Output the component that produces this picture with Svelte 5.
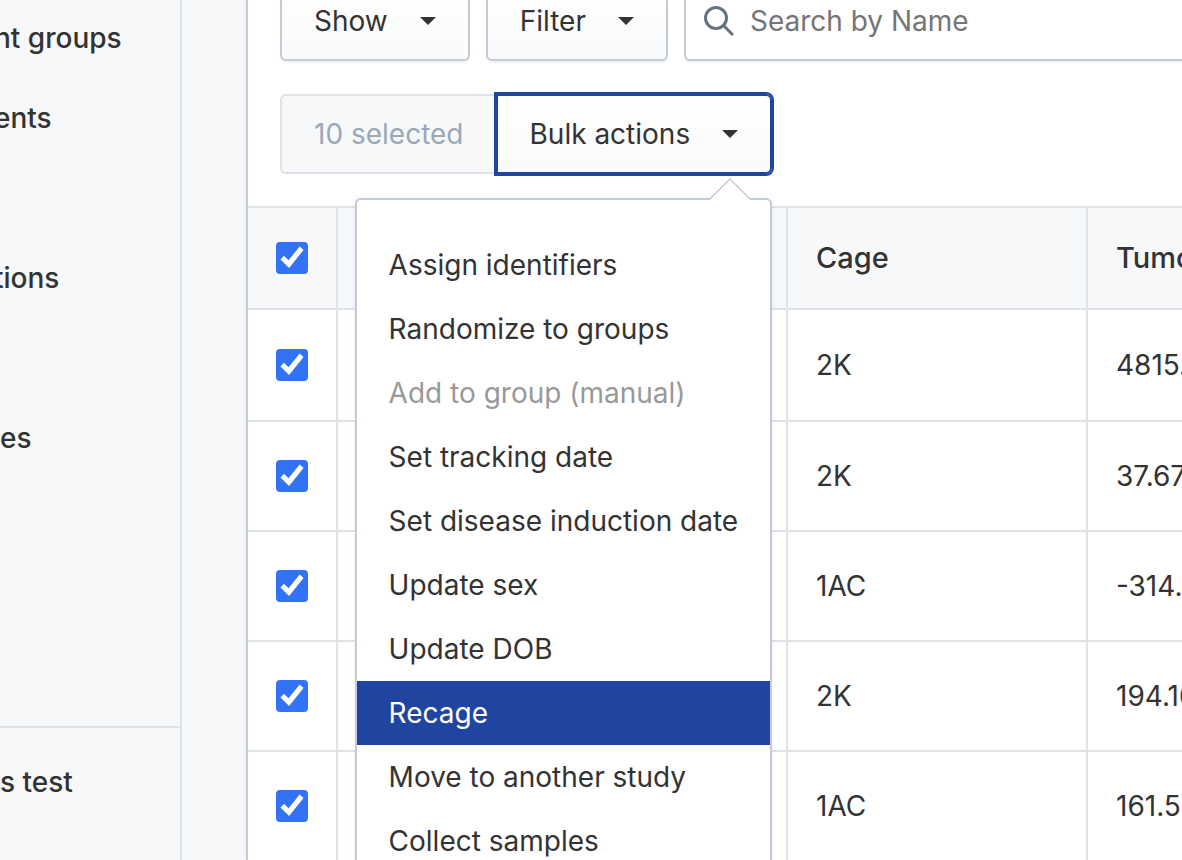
<script lang="ts">
  type NavItem = { label: string; cut?: boolean };
  type Row = { id: number; cage: string; volume: string; selected: boolean };
  type Action = { label: string; disabled?: boolean };

  // cut: the label starts in the middle of a letter at the window edge
  const navGroups: NavItem[][] = [
    [
      { label: 'nt groups', cut: true },
      { label: 'ents', cut: true }
    ],
    [{ label: 'tions', cut: true }],
    [{ label: 'es' }]
  ];

  const actions: Action[] = [
    { label: 'Assign identifiers' },
    { label: 'Randomize to groups' },
    { label: 'Add to group (manual)', disabled: true },
    { label: 'Set tracking date' },
    { label: 'Set disease induction date' },
    { label: 'Update sex' },
    { label: 'Update DOB' },
    { label: 'Recage' },
    { label: 'Move to another study' },
    { label: 'Collect samples' }
  ];

  let rows: Row[] = $state([
    { id: 1, cage: '2K', volume: '4815.', selected: true },
    { id: 2, cage: '2K', volume: '37.67', selected: true },
    { id: 3, cage: '1AC', volume: '-314.', selected: true },
    { id: 4, cage: '2K', volume: '194.16', selected: true },
    { id: 5, cage: '1AC', volume: '161.5', selected: true }
  ]);

  let search = $state('');
  let menuOpen = $state(true);
  let active = $state('Recage');
  let allSelected = $derived(rows.every((r) => r.selected));

  function toggleAll() {
    const next = !allSelected;
    rows.forEach((r) => (r.selected = next));
  }
</script>

{#snippet caret()}
  <svg class="caret" viewBox="0 0 16 8" aria-hidden="true"><path d="M0 0h16L8 8z" /></svg>
{/snippet}

<div class="page">
  <aside class="sidebar">
    <nav>
      {#each navGroups as group}
        <ul>
          {#each group as item}
            <li><a href="#top" class:cut={item.cut}>{item.label}</a></li>
          {/each}
        </ul>
      {/each}
    </nav>
    <div class="sidebar-footer">
      <a href="#top">s test</a>
    </div>
  </aside>

  <main class="content">
    <div class="toolbar">
      <button class="btn" type="button">Show {@render caret()}</button>
      <button class="btn" type="button">Filter {@render caret()}</button>
      <div class="search">
        <svg class="search-icon" viewBox="0 0 30 30" aria-hidden="true">
          <circle cx="12" cy="12" r="10.5" />
          <path d="M19.5 19.5L29 29" />
        </svg>
        <input type="text" placeholder="Search by Name" aria-label="Search by Name" bind:value={search} />
      </div>
    </div>

    <div class="bulk">
      <span class="count">10 selected</span>
      <div class="dropdown">
        <button class="btn focused" type="button" aria-expanded={menuOpen} onclick={() => (menuOpen = !menuOpen)}>
          Bulk actions {@render caret()}
        </button>
        {#if menuOpen}
          <div class="menu">
            <svg class="pointer" viewBox="0 0 42 22" aria-hidden="true">
              <path class="fill" d="M1 22v-1L21 1l20 20v1z" />
              <path class="line" d="M1 21L21 1l20 20" />
            </svg>
            <ul>
              {#each actions as action}
                <li>
                  <button
                    type="button"
                    class:active={active === action.label}
                    disabled={action.disabled}
                    onmouseenter={() => (active = action.label)}
                  >
                    {action.label}
                  </button>
                </li>
              {/each}
            </ul>
          </div>
        {/if}
      </div>
    </div>

    <table>
      <colgroup>
        <col class="col-check" />
        <col class="col-name" />
        <col class="col-data" />
        <col class="col-data" />
      </colgroup>
      <thead>
        <tr>
          <th class="check">
            <input type="checkbox" aria-label="Select all" checked={allSelected} onchange={toggleAll} />
          </th>
          <th></th>
          <th>Cage</th>
          <th>Tumor</th>
        </tr>
      </thead>
      <tbody>
        {#each rows as row (row.id)}
          <tr>
            <td class="check">
              <input type="checkbox" aria-label="Select row" bind:checked={row.selected} />
            </td>
            <td></td>
            <td>{row.cage}</td>
            <td>{row.volume}</td>
          </tr>
        {/each}
      </tbody>
    </table>
  </main>
</div>

<style>
  :global(body) {
    background: #f7f8fa;
  }

  .page {
    --ink: #333333;
    --line: #dfe3e8;
    --line-strong: #c4cbd6;
    --panel: #f6f8fa;
    --accent: #1f45a0;
    display: flex;
    gap: 64px;
    height: 100vh;
    overflow: hidden;
    background: #f7f8fa;
    color: var(--ink);
    font-family: Inter, 'Liberation Sans', sans-serif;
    font-size: 28px;
    line-height: 40px;
  }

  .page * {
    box-sizing: border-box;
  }

  ul {
    list-style: none;
    margin: 0;
    padding: 0;
  }

  button,
  input {
    font: inherit;
    color: inherit;
  }

  .sidebar {
    flex: 0 0 182px;
    display: flex;
    flex-direction: column;
    justify-content: space-between;
    border-right: 2px solid var(--line);
    overflow: hidden;
  }

  nav,
  nav ul {
    display: flex;
    flex-direction: column;
  }

  nav {
    gap: 84px;
  }

  nav ul {
    gap: 4px;
  }

  .sidebar a {
    display: block;
    color: inherit;
    font-weight: 500;
    line-height: 76px;
    text-decoration: none;
    white-space: nowrap;
  }

  .sidebar a.cut {
    margin-left: -6px;
  }

  .sidebar-footer {
    height: 134px;
    padding-top: 16px;
    border-top: 2px solid var(--line);
  }

  .content {
    flex: 1;
    min-width: 0;
    border-left: 2px solid var(--line-strong);
    background: #ffffff;
    box-shadow: 0 0 4px rgba(60, 80, 110, 0.1);
  }

  /* scrolled a little: the first row is cut by the top edge */
  .toolbar {
    display: flex;
    gap: 16px;
    margin: -19px -64px 0 0;
    padding: 0 0 33px 32px;
  }

  .btn {
    display: flex;
    align-items: center;
    gap: 32px;
    height: 80px;
    padding: 0 32px;
    border: 2px solid var(--line-strong);
    border-radius: 6px;
    background: linear-gradient(#ffffff, #f9fafb);
    box-shadow: 0 2px 2px rgba(30, 50, 80, 0.07);
    white-space: nowrap;
    cursor: pointer;
  }

  .caret {
    width: 16px;
    height: 8px;
    fill: var(--ink);
  }

  .search {
    flex: 1;
    display: flex;
    align-items: center;
    gap: 16px;
    height: 80px;
    padding: 0 18px;
    border: 2px solid var(--line-strong);
    border-radius: 6px;
    background: #ffffff;
    box-shadow: 0 2px 2px rgba(30, 50, 80, 0.07);
  }

  .search-icon {
    flex: none;
    width: 30px;
    height: 30px;
    fill: none;
    stroke: #637381;
    stroke-width: 3;
  }

  .search input {
    flex: 1;
    min-width: 0;
    padding: 0;
    border: 0;
    background: transparent;
    outline: none;
  }

  .search input::placeholder {
    color: #757575;
    opacity: 1;
  }

  .bulk {
    display: flex;
    padding: 0 32px 32px;
  }

  .count {
    height: 80px;
    padding: 0 32px;
    border: 2px solid var(--line);
    border-right: 0;
    border-radius: 6px 0 0 6px;
    background: var(--panel);
    color: #9ba8b7;
    line-height: 76px;
    white-space: nowrap;
  }

  .dropdown {
    position: relative;
  }

  .btn.focused {
    border-color: var(--accent);
    border-radius: 0 6px 6px 0;
    box-shadow: 0 0 0 2px var(--accent);
  }

  .menu {
    position: absolute;
    z-index: 1;
    top: calc(100% + 24px);
    right: 0;
    width: max-content;
    padding: 33px 0;
    border: 2px solid var(--line-strong);
    border-radius: 6px;
    background: #ffffff;
    box-shadow: 0 0 4px rgba(30, 50, 80, 0.08);
  }

  .pointer {
    position: absolute;
    right: 19px;
    bottom: 100%;
    width: 42px;
    height: 22px;
  }

  .pointer .fill {
    fill: #ffffff;
  }

  .pointer .line {
    fill: none;
    stroke: var(--line-strong);
    stroke-width: 1.4;
  }

  .menu button {
    display: block;
    width: 100%;
    height: 64px;
    padding: 0 32px;
    border: 0;
    background: transparent;
    text-align: left;
    white-space: nowrap;
    cursor: pointer;
  }

  .menu button:disabled {
    color: #999999;
    cursor: default;
  }

  .menu button.active {
    background: var(--accent);
    color: #ffffff;
  }

  table {
    width: 1140px;
    table-layout: fixed;
    border-collapse: separate;
    border-spacing: 0;
  }

  .col-check {
    width: 90px;
  }

  .col-name {
    width: 450px;
  }

  .col-data {
    width: 300px;
  }

  th,
  td {
    height: 110px;
    padding: 0 28px;
    border-right: 2px solid var(--line);
    border-bottom: 2px solid var(--line);
    text-align: left;
    vertical-align: middle;
    white-space: nowrap;
  }

  th {
    height: 104px;
    border-top: 2px solid var(--line);
    background: var(--panel);
    font-size: 29px;
    font-weight: 500;
  }

  tbody tr:first-child td {
    height: 112px;
  }

  .check input {
    appearance: none;
    display: block;
    width: 32px;
    height: 32px;
    margin: 0;
    border: 2px solid var(--line-strong);
    border-radius: 4px;
    background: #ffffff;
    cursor: pointer;
  }

  .check input:checked {
    border: 0;
    background: #3273f6;
  }

  .check input:checked::before {
    content: '';
    display: block;
    width: 32px;
    height: 32px;
    background: #ffffff;
    clip-path: polygon(14% 55%, 25% 43%, 39% 57%, 74% 14%, 86% 25%, 41% 81%);
  }
</style>
